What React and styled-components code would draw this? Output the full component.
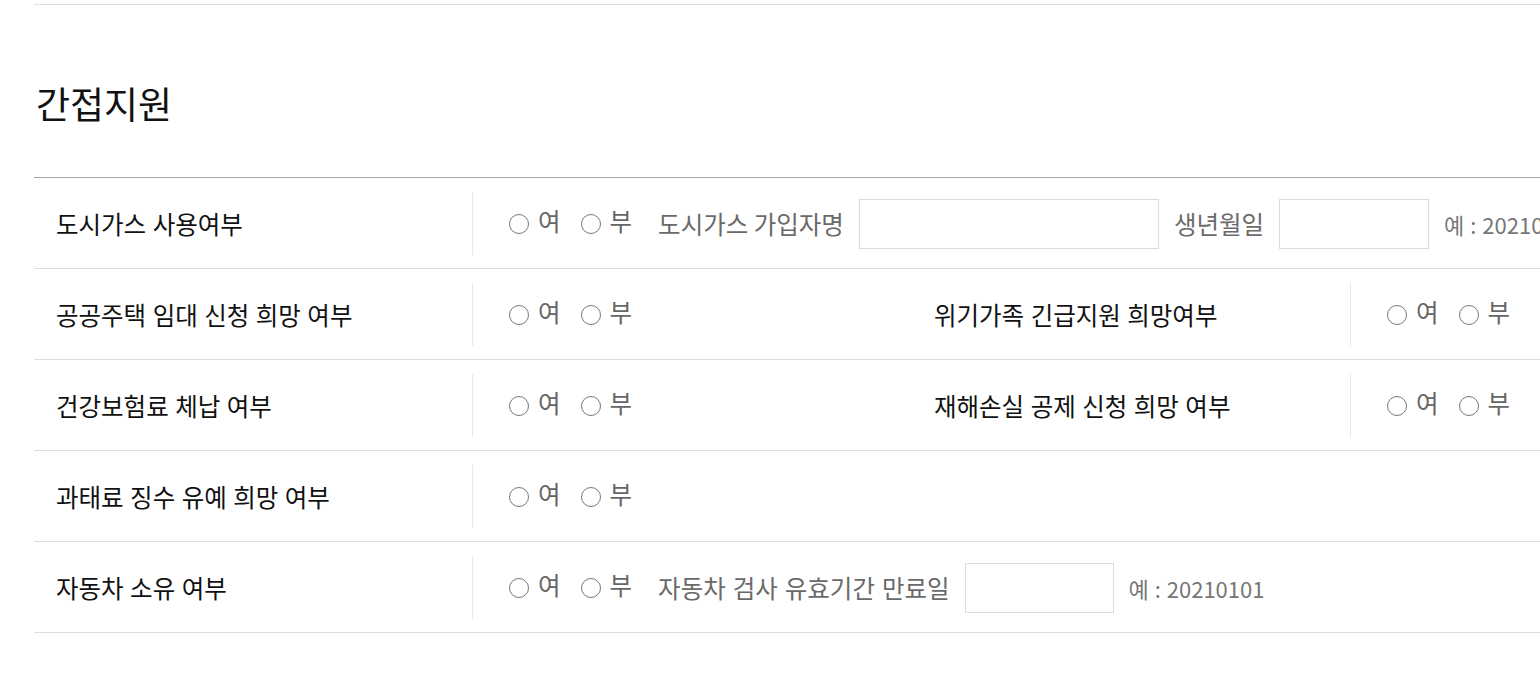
import React from "react";
import styled, { createGlobalStyle } from "styled-components";

const GlobalStyle = createGlobalStyle`
  html, body {
    margin: 0;
    padding: 0;
    background: #fff;
    overflow-x: hidden;
  }
  body {
    font-family: "Noto Sans CJK KR", "Noto Sans", sans-serif;
    color: #111;
  }
`;

const rows = [
  {
    label: "도시가스 사용여부",
    name: "gas",
    extra: "gas",
  },
  {
    label: "공공주택 임대 신청 희망 여부",
    name: "house",
    side: { label: "위기가족 긴급지원 희망여부", name: "crisis" },
  },
  {
    label: "건강보험료 체납 여부",
    name: "health",
    side: { label: "재해손실 공제 신청 희망 여부", name: "disaster" },
  },
  {
    label: "과태료 징수 유예 희망 여부",
    name: "fine",
  },
  {
    label: "자동차 소유 여부",
    name: "car",
    extra: "car",
  },
];

function YesNo({ name }) {
  return (
    <RadioGroup>
      <Option>
        <Radio type="radio" name={name} />
        <OptionText>여</OptionText>
      </Option>
      <Option>
        <Radio type="radio" name={name} />
        <OptionText>부</OptionText>
      </Option>
    </RadioGroup>
  );
}

export default function App() {
  return (
    <>
      <GlobalStyle />
      <Page>
        <Section>
          <Title>간접지원</Title>
          <Table>
            {rows.map((row) => (
              <Row key={row.name}>
                <Th>{row.label}</Th>
                <Td $span={row.side ? 1 : 3}>
                  <Inner>
                    <YesNo name={row.name} />
                    {row.extra === "gas" && (
                      <>
                        <FieldLabel>도시가스 가입자명</FieldLabel>
                        <TextInput $w={300} />
                        <FieldLabel>생년월일</FieldLabel>
                        <TextInput $w={150} />
                        <Hint>예 : 20210101</Hint>
                      </>
                    )}
                    {row.extra === "car" && (
                      <>
                        <FieldLabel $wide>자동차 검사 유효기간 만료일</FieldLabel>
                        <TextInput $w={149} />
                        <Hint>예 : 20210101</Hint>
                      </>
                    )}
                  </Inner>
                </Td>
                {row.side && (
                  <>
                    <Th>{row.side.label}</Th>
                    <Td $span={1}>
                      <Inner>
                        <YesNo name={row.side.name} />
                      </Inner>
                    </Td>
                  </>
                )}
              </Row>
            ))}
          </Table>
        </Section>
      </Page>
    </>
  );
}

const Page = styled.div`
  width: 100vw;
  overflow: hidden;
  padding: 4px 0 40px 34px;
  box-sizing: border-box;
`;

const Section = styled.section`
  width: 1700px;
  border-top: 1px solid #dedede;
`;

const Title = styled.h2`
  margin: 78px 0 54px 2px;
  font-size: 37px;
  line-height: 40px;
  font-weight: 400;
  color: #111;
`;

const Table = styled.div`
  border-top: 1px solid #a8a8a8;
`;

const Row = styled.div`
  display: grid;
  grid-template-columns: 438px 440px 438px 1fr;
  height: 91px;
  box-sizing: border-box;
  border-bottom: 1px solid #dcdcdc;
`;

const Th = styled.div`
  display: flex;
  align-items: center;
  padding-left: 22px;
  font-size: 24.5px;
  word-spacing: 1px;
  color: #111;
  white-space: nowrap;
`;

const Td = styled.div`
  grid-column: span ${(p) => p.$span};
  padding: 14px 0 13px;
  box-sizing: border-box;
`;

const Inner = styled.div`
  height: 100%;
  display: flex;
  align-items: center;
  gap: 15px;
  padding-left: 36px;
  border-left: 1px solid #e8e8e8;
  white-space: nowrap;
`;

const RadioGroup = styled.div`
  display: flex;
  align-items: center;
  gap: 20px;
  margin-right: 11px;
`;

const Option = styled.label`
  display: flex;
  align-items: center;
  gap: 9px;
  cursor: pointer;
`;

const Radio = styled.input`
  appearance: none;
  margin: 0;
  width: 20px;
  height: 20px;
  border: 1.6px solid #777;
  border-radius: 50%;
  box-sizing: border-box;
  background: #fff;
  &:checked {
    background: radial-gradient(#555 0 4px, #fff 5px);
  }
`;

const OptionText = styled.span`
  font-size: 24.5px;
  color: #666;
  padding-bottom: 7px;
`;

const FieldLabel = styled.span`
  font-size: 24.5px;
  color: #6a6a6a;
  word-spacing: ${(p) => (p.$wide ? "1.5px" : "0")};
`;

const TextInput = styled.input`
  width: ${(p) => p.$w}px;
  height: 50px;
  box-sizing: border-box;
  border: 1px solid #dcdcdc;
  margin: 0;
  padding: 0 10px;
  font-size: 20px;
  outline: none;
`;

const Hint = styled.span`
  font-size: 22px;
  color: #777;
  word-spacing: 1px;
`;
